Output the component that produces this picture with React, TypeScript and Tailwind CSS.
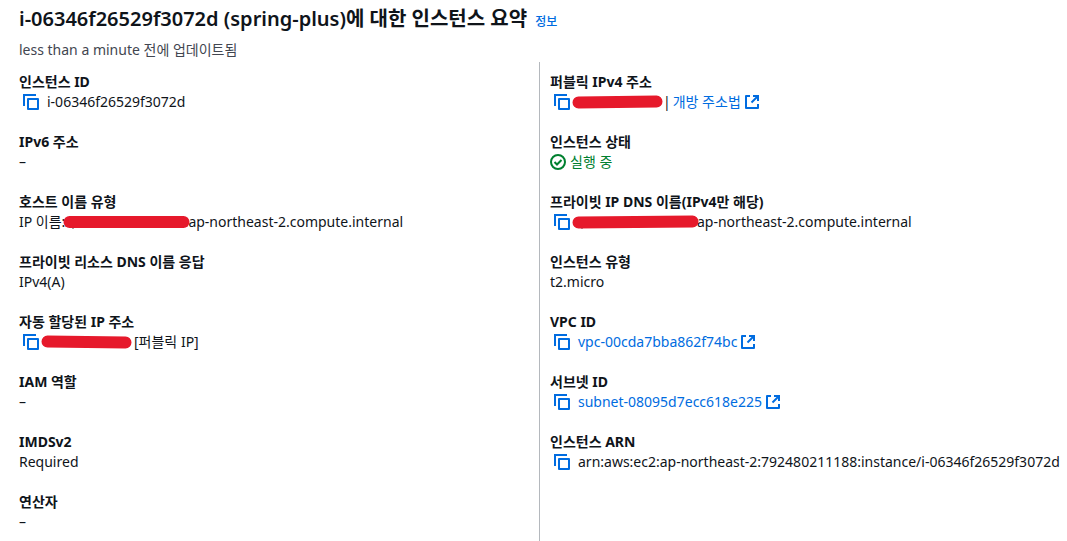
import type { ReactNode } from "react";

function CopyButton() {
  return (
    <button type="button" aria-label="복사" className="ml-1 shrink-0 cursor-pointer text-[#006ce0]">
      <svg viewBox="0 0 16 16" className="block size-4" fill="none" stroke="currentColor" strokeWidth="2">
        <path d="M13 1H1v11" />
        <path d="M5 5h10v10H5z" strokeLinejoin="round" />
      </svg>
    </button>
  );
}

function ExternalIcon() {
  return (
    <svg viewBox="0 0 14 14" className="block size-3.5 shrink-0" fill="none" stroke="currentColor" strokeWidth="2" aria-hidden="true">
      <path d="M5 1H1v12h12V9" strokeLinejoin="round" />
      <path d="M8 1h5v5" />
      <path d="M13 1 6.5 7.5" />
    </svg>
  );
}

function CheckIcon() {
  return (
    <svg viewBox="0 0 16 16" className="block size-4 shrink-0" fill="none" stroke="currentColor" strokeWidth="2" aria-hidden="true">
      <circle cx="8" cy="8" r="7" />
      <path d="m4.5 8 2.5 2.5L11.5 6" />
    </svg>
  );
}

function Redaction({ long = false, tilt = 0 }: { long?: boolean; tilt?: number }) {
  const width = long ? 127 : 91;
  return (
    <svg
      viewBox={`0 0 ${width} 14`}
      className={long ? "relative -mr-0.5 block h-3.5 w-[127px] shrink-0" : "block h-3.5 w-[91px] shrink-0"}
      aria-hidden="true"
    >
      {long && <path d="M10 7v6.5" stroke="#0f141a" strokeWidth="1.5" />}
      <path d={`M6.5 ${7 + tilt}L${width - 6.5} ${7 - tilt}`} stroke="#e6192b" strokeWidth="12" strokeLinecap="round" />
    </svg>
  );
}

function ExternalLink({ children }: { children: ReactNode }) {
  return (
    <a href="#" className="flex items-center gap-1 text-[#006ce0]">
      {children}
      <ExternalIcon />
    </a>
  );
}

function Field({ label, children }: { label: string; children: ReactNode }) {
  return (
    <div>
      <dt className="font-bold">{label}</dt>
      <dd className="flex h-5 items-center">{children}</dd>
    </div>
  );
}

export default function App() {
  return (
    <main className="bg-white pr-2 pl-[19px] font-['Noto_Sans','Noto_Sans_CJK_KR',sans-serif] text-sm leading-5 whitespace-nowrap text-[#0f141a]">
      <header className="pt-[7px]">
        <div className="flex items-baseline gap-2">
          <h1 className="text-xl leading-6 font-semibold">i-06346f26529f3072d (spring-plus)에 대한 인스턴스 요약</h1>
          <a href="#" className="text-xs leading-4 font-medium text-[#006ce0]">정보</a>
        </div>
        <p className="mt-[9px] text-[#424650]">less than a minute 전에 업데이트됨</p>
      </header>
      <div className="mt-[2px] grid grid-cols-2">
        <dl className="flex flex-col gap-5 pt-[10px] pb-[9px]">
          <Field label="인스턴스 ID">
            <CopyButton />
            <span className="ml-2">i-06346f26529f3072d</span>
          </Field>
          <Field label="IPv6 주소">–</Field>
          <Field label="호스트 이름 유형">
            <span className="-mr-0.5">IP 이름:</span>
            <Redaction long />
            <span>ap-northeast-2.compute.internal</span>
          </Field>
          <Field label="프라이빗 리소스 DNS 이름 응답">IPv4(A)</Field>
          <Field label="자동 할당된 IP 주소">
            <CopyButton />
            <span className="ml-0.5 flex items-center gap-0.5">
              <Redaction tilt={-0.5} />
              <span>[퍼블릭 IP]</span>
            </span>
          </Field>
          <Field label="IAM 역할">–</Field>
          <Field label="IMDSv2">Required</Field>
          <Field label="연산자">–</Field>
        </dl>
        <dl className="flex flex-col gap-5 border-l border-[#b4b8bd] pt-[10px] pb-[9px] pl-[10px]">
          <Field label="퍼블릭 IPv4 주소">
            <CopyButton />
            <span className="ml-0.5 flex items-center">
              <Redaction tilt={0.5} />
              <span className="mr-0.5">|</span>
              <ExternalLink>개방 주소법</ExternalLink>
            </span>
          </Field>
          <Field label="인스턴스 상태">
            <span className="flex items-center gap-1 text-[#00802f]">
              <CheckIcon />
              실행 중
            </span>
          </Field>
          <Field label="프라이빗 IP DNS 이름(IPv4만 해당)">
            <CopyButton />
            <span className="ml-0.5 flex items-center">
              <Redaction long tilt={0.5} />
              <span>ap-northeast-2.compute.internal</span>
            </span>
          </Field>
          <Field label="인스턴스 유형">t2.micro</Field>
          <Field label="VPC ID">
            <CopyButton />
            <span className="ml-2">
              <ExternalLink>vpc-00cda7bba862f74bc</ExternalLink>
            </span>
          </Field>
          <Field label="서브넷 ID">
            <CopyButton />
            <span className="ml-2">
              <ExternalLink>subnet-08095d7ecc618e225</ExternalLink>
            </span>
          </Field>
          <Field label="인스턴스 ARN">
            <CopyButton />
            <span className="ml-2">arn:aws:ec2:ap-northeast-2:792480211188:instance/i-06346f26529f3072d</span>
          </Field>
        </dl>
      </div>
    </main>
  );
}
